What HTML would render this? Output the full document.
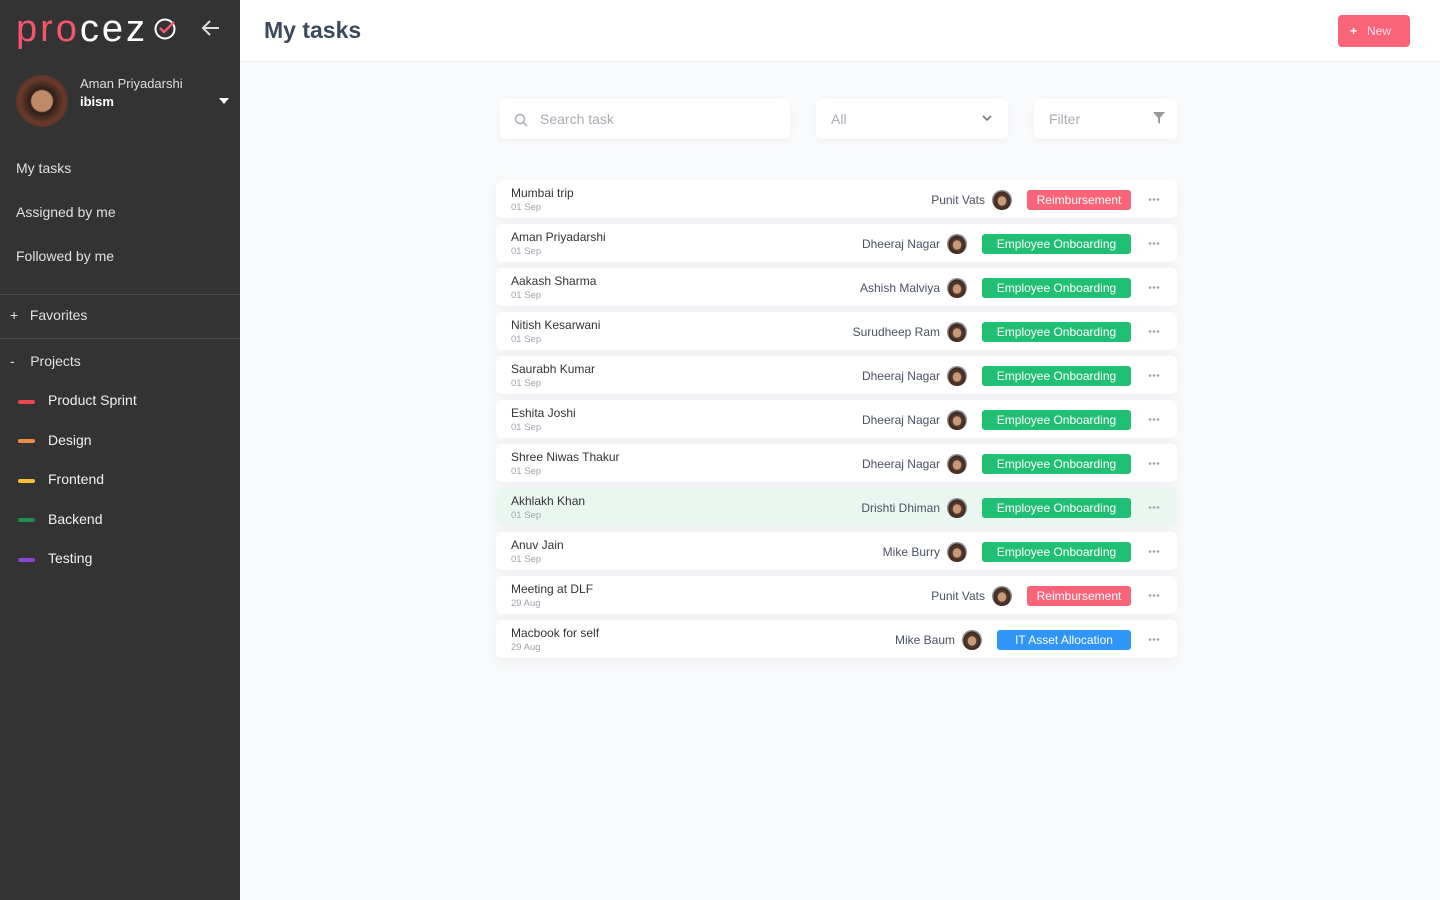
<!DOCTYPE html>
<html><head><meta charset="utf-8"><style>
*{box-sizing:border-box;margin:0;padding:0}
body{width:1440px;height:900px;overflow:hidden;font-family:"Liberation Sans",sans-serif;background:#f9fafb;position:relative}
.sb{position:absolute;left:0;top:0;width:240px;height:900px;background:#333333;color:#e6e6e6}
.logo{position:absolute;left:16px;top:8px;font-size:38px;letter-spacing:3px;color:#fff;font-weight:normal}
.logo b{color:#f5566c;font-weight:normal}
.nav{position:absolute;left:16px;font-size:14px;color:#e0e0e0}
.hr{position:absolute;left:0;width:240px;height:1px;background:#4a4a4a}
.proj{position:absolute;left:48px;font-size:14px;color:#f0f0f0}
.bar{position:absolute;left:18px;width:17px;height:4px;border-radius:2px}
.top{position:absolute;left:240px;top:0;width:1200px;height:62px;background:#fff;border-bottom:1px solid #eceef1}
.card{position:absolute;background:#fff;border-radius:5px;box-shadow:0 2px 8px rgba(0,0,0,.04);color:#a8adb5;font-size:14px}
.row{position:absolute;left:496px;width:681px;height:38px;background:#fff;border-radius:6px;box-shadow:0 4px 14px rgba(40,60,90,.05)}
.row .t{position:absolute;left:15px;top:6px;font-size:12px;color:#333}
.row .d{position:absolute;left:15px;top:22px;font-size:9.5px;color:#a0a6ae}
.row .r{position:absolute;right:46px;top:10px;display:flex;align-items:center;height:20px}
.row .n{font-size:12px;color:#4a5260;margin-right:7px}
.av{width:20px;height:20px;border-radius:50%;background:radial-gradient(ellipse at 50% 55%,#c99a78 0 28%,#5a3a2a 32%,#3a2a22 60%,#8a8a90 62%);margin-right:15px}
.tag{height:20px;border-radius:3px;color:#fff;font-size:12px;line-height:20px;text-align:center}
.dots{position:absolute;right:17px;top:18px;width:12px;height:3px;background:radial-gradient(circle,#aaa 0 1.2px,transparent 1.5px) 0 0/4px 3px repeat-x}
</style></head><body>
<div class="sb">
<div class="logo"><b>pro</b>cez</div>
<svg style="position:absolute;left:154px;top:17px" width="24" height="24" viewBox="0 0 24 24"><circle cx="11" cy="12" r="9.5" fill="none" stroke="#fff" stroke-width="2"/><path d="M6 11l4 4 10-10" fill="none" stroke="#f5566c" stroke-width="2.4"/></svg>
<svg style="position:absolute;left:201px;top:19px" width="20" height="18" viewBox="0 0 20 18"><path d="M18 9H3M9 2L2 9l7 7" fill="none" stroke="#ddd" stroke-width="2"/></svg>
<div style="position:absolute;left:16px;top:75px;width:52px;height:52px;border-radius:50%;background:radial-gradient(ellipse at 50% 50%,#c08a66 0 28%,#2a1e1a 32%,#6a3a2a 60%,#3a2520)"></div>
<div style="position:absolute;left:80px;top:76px;font-size:13px;color:#ddd">Aman Priyadarshi</div>
<div style="position:absolute;left:80px;top:94px;font-size:13px;color:#fff;font-weight:bold">ibism</div>
<div style="position:absolute;left:219px;top:98px;border:5px solid transparent;border-top:6px solid #fff;border-bottom:0"></div>
<div class="nav" style="top:160px">My tasks</div>
<div class="nav" style="top:204px">Assigned by me</div>
<div class="nav" style="top:248px">Followed by me</div>
<div class="hr" style="top:294px"></div>
<div class="nav" style="left:10px;top:307px">+ &nbsp;&nbsp;Favorites</div>
<div class="hr" style="top:338px"></div>
<div class="nav" style="left:10px;top:353px">- &nbsp;&nbsp;&nbsp;Projects</div>
<div class="bar" style="top:400px;background:#e8474f"></div><div class="proj" style="top:392px">Product Sprint</div>
<div class="bar" style="top:439px;background:#f08c45"></div><div class="proj" style="top:432px">Design</div>
<div class="bar" style="top:479px;background:#f2c233"></div><div class="proj" style="top:471px">Frontend</div>
<div class="bar" style="top:518px;background:#1e8f4a"></div><div class="proj" style="top:511px">Backend</div>
<div class="bar" style="top:558px;background:#8c44d6"></div><div class="proj" style="top:550px">Testing</div>
</div>
<div class="top">
<div style="position:absolute;left:24px;top:17px;font-size:23px;color:#3b4a5c;font-weight:bold">My tasks</div>
<div style="position:absolute;left:1098px;top:15px;width:72px;height:32px;background:#fa6478;border-radius:4px;color:#fde;font-size:12px;line-height:32px;padding-left:12px"><b style="color:#fff">+</b>&nbsp;&nbsp;&nbsp;New</div>
</div>
<div class="card" style="left:500px;top:99px;width:290px;height:40px">
<svg style="position:absolute;left:14px;top:14px" width="14" height="14" viewBox="0 0 14 14"><circle cx="6" cy="6" r="4.5" fill="none" stroke="#a8adb5" stroke-width="1.5"/><path d="M9.5 9.5L13 13" stroke="#a8adb5" stroke-width="1.5"/></svg>
<span style="position:absolute;left:40px;top:12px">Search task</span></div>
<div class="card" style="left:816px;top:99px;width:192px;height:40px"><span style="position:absolute;left:15px;top:12px">All</span>
<svg style="position:absolute;left:166px;top:16px" width="10" height="7" viewBox="0 0 10 7"><path d="M1 1l4 4 4-4" fill="none" stroke="#777" stroke-width="1.6"/></svg></div>
<div class="card" style="left:1034px;top:99px;width:143px;height:40px"><span style="position:absolute;left:15px;top:12px">Filter</span>
<svg style="position:absolute;left:119px;top:13px" width="12" height="12" viewBox="0 0 12 12"><path d="M0 0h12L7 6v6L5 10V6z" fill="#999"/></svg></div>

<div class="row" style="top:180px"><div class="t">Mumbai trip</div><div class="d">01 Sep</div><div class="r"><span class="n">Punit Vats</span><div class="av"></div><div class="tag" style="width:104px;background:#fa6478">Reimbursement</div></div><div class="dots"></div></div>
<div class="row" style="top:224px"><div class="t">Aman Priyadarshi</div><div class="d">01 Sep</div><div class="r"><span class="n">Dheeraj Nagar</span><div class="av"></div><div class="tag" style="width:149px;background:#21bf73">Employee Onboarding</div></div><div class="dots"></div></div>
<div class="row" style="top:268px"><div class="t">Aakash Sharma</div><div class="d">01 Sep</div><div class="r"><span class="n">Ashish Malviya</span><div class="av"></div><div class="tag" style="width:149px;background:#21bf73">Employee Onboarding</div></div><div class="dots"></div></div>
<div class="row" style="top:312px"><div class="t">Nitish Kesarwani</div><div class="d">01 Sep</div><div class="r"><span class="n">Surudheep Ram</span><div class="av"></div><div class="tag" style="width:149px;background:#21bf73">Employee Onboarding</div></div><div class="dots"></div></div>
<div class="row" style="top:356px"><div class="t">Saurabh Kumar</div><div class="d">01 Sep</div><div class="r"><span class="n">Dheeraj Nagar</span><div class="av"></div><div class="tag" style="width:149px;background:#21bf73">Employee Onboarding</div></div><div class="dots"></div></div>
<div class="row" style="top:400px"><div class="t">Eshita Joshi</div><div class="d">01 Sep</div><div class="r"><span class="n">Dheeraj Nagar</span><div class="av"></div><div class="tag" style="width:149px;background:#21bf73">Employee Onboarding</div></div><div class="dots"></div></div>
<div class="row" style="top:444px"><div class="t">Shree Niwas Thakur</div><div class="d">01 Sep</div><div class="r"><span class="n">Dheeraj Nagar</span><div class="av"></div><div class="tag" style="width:149px;background:#21bf73">Employee Onboarding</div></div><div class="dots"></div></div>
<div class="row" style="top:488px;background:#e9f7f0"><div class="t">Akhlakh Khan</div><div class="d">01 Sep</div><div class="r"><span class="n">Drishti Dhiman</span><div class="av"></div><div class="tag" style="width:149px;background:#21bf73">Employee Onboarding</div></div><div class="dots"></div></div>
<div class="row" style="top:532px"><div class="t">Anuv Jain</div><div class="d">01 Sep</div><div class="r"><span class="n">Mike Burry</span><div class="av"></div><div class="tag" style="width:149px;background:#21bf73">Employee Onboarding</div></div><div class="dots"></div></div>
<div class="row" style="top:576px"><div class="t">Meeting at DLF</div><div class="d">29 Aug</div><div class="r"><span class="n">Punit Vats</span><div class="av"></div><div class="tag" style="width:104px;background:#fa6478">Reimbursement</div></div><div class="dots"></div></div>
<div class="row" style="top:620px"><div class="t">Macbook for self</div><div class="d">29 Aug</div><div class="r"><span class="n">Mike Baum</span><div class="av"></div><div class="tag" style="width:134px;background:#2f95f7">IT Asset Allocation</div></div><div class="dots"></div></div>
</body></html>
